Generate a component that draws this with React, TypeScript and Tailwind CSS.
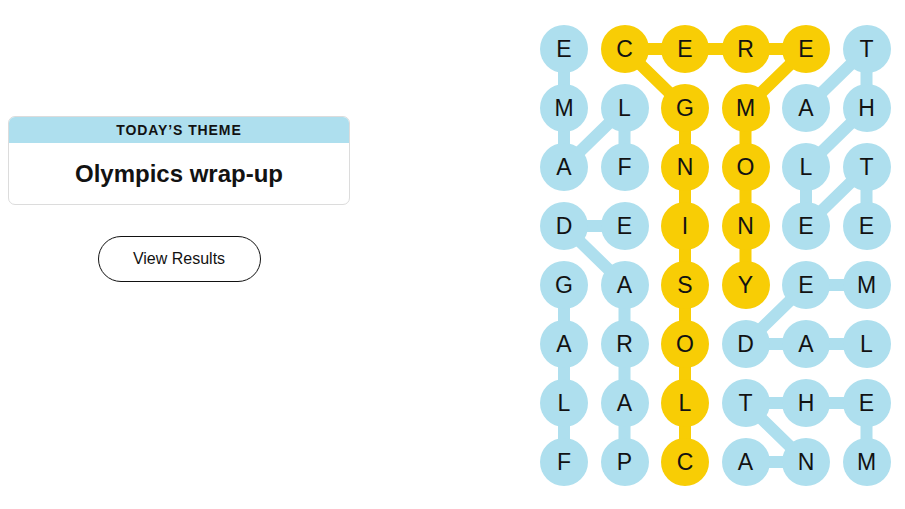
import React from "react";

const letters = [
  "ECERET",
  "MLGMAH",
  "AFNOLT",
  "DEINEE",
  "GASYEM",
  "ARODAL",
  "LALTHE",
  "FPCANM",
];

const yellowCells = new Set([
  "0,1", "0,2", "0,3", "0,4",
  "1,2", "2,2", "3,2", "4,2", "5,2", "6,2", "7,2",
  "1,3", "2,3", "3,3", "4,3",
]);

type P = [number, number];
const blueWords: P[][] = [
  [[2, 1], [1, 1], [2, 0], [1, 0], [0, 0]],
  [[1, 4], [0, 5], [1, 5], [2, 4], [3, 4], [2, 5], [3, 5]],
  [[7, 1], [6, 1], [5, 1], [4, 1], [3, 0], [3, 1]],
  [[7, 0], [6, 0], [5, 0], [4, 0]],
  [[4, 5], [4, 4], [5, 3], [5, 4], [5, 5]],
  [[7, 3], [7, 4], [6, 3], [6, 4], [6, 5], [7, 5]],
];
const spangram: P[] = [
  [7, 2], [6, 2], [5, 2], [4, 2], [3, 2], [2, 2], [1, 2], [0, 1], [0, 2], [0, 3], [0, 4], [1, 3], [2, 3], [3, 3], [4, 3],
];

const cx = (c: number) => 24 + c * 60.5;
const cy = (r: number) => 24 + r * 59;
const pts = (w: P[]) => w.map(([r, c]) => `${cx(c)},${cy(r)}`).join(" ");

export default function App() {
  return (
    <div className="w-[905px] h-[509px] bg-white flex" style={{ fontFamily: "'Liberation Sans', Arial, sans-serif" }}>
      <div className="w-[540px] shrink-0 pl-[8px] pt-[116px]">
        <div className="w-[342px] rounded-[7px] border border-[#dcdcdc] overflow-hidden">
          <div className="h-[26px] bg-[#aedfee] flex items-center justify-center text-[14px] font-semibold tracking-[0.9px] text-[#121212]">
            TODAY’S THEME
          </div>
          <div className="h-[61px] flex items-center justify-center text-[24px] font-bold text-[#121212]">
            Olympics wrap-up
          </div>
        </div>
        <div className="w-[342px] flex justify-center mt-[31px]">
          <button className="w-[163px] h-[46px] rounded-full border border-[#121212] text-[16px] text-[#121212] bg-white">
            View Results
          </button>
        </div>
      </div>
      <div className="pt-[25px]">
        <div className="relative">
          <svg className="absolute left-0 top-0" width="351" height="462">
            {blueWords.map((w, i) => (
              <polyline key={i} points={pts(w)} fill="none" stroke="#aedfee" strokeWidth={12} strokeLinejoin="round" />
            ))}
            <polyline points={pts(spangram)} fill="none" stroke="#f8cd05" strokeWidth={12} strokeLinejoin="round" />
          </svg>
          <div className="relative grid grid-cols-[repeat(6,48px)] gap-x-[12.5px] gap-y-[11px]">
            {letters.map((row, r) =>
              row.split("").map((ch, c) => (
                <div
                  key={`${r}-${c}`}
                  className={`w-[48px] h-[48px] rounded-full flex items-center justify-center text-[23px] text-[#121212] ${
                    yellowCells.has(`${r},${c}`) ? "bg-[#f8cd05]" : "bg-[#aedfee]"
                  }`}
                >
                  {ch}
                </div>
              ))
            )}
          </div>
        </div>
      </div>
    </div>
  );
}
